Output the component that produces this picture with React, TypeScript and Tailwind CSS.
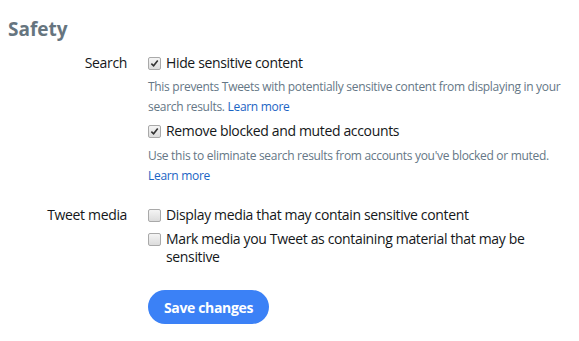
export default function App() {
  return (
    <div className="w-[579px] h-[341px] bg-white overflow-hidden font-['Open_Sans',sans-serif] text-[#14171a] tracking-[-0.35px]">
      <h2 className="pl-2 pt-[15px] text-[19px] leading-[28px] font-bold text-[#66757f] tracking-normal">Safety</h2>

      <div className="mt-[11px] grid grid-cols-[127px_1fr] gap-x-[21px] pr-1">
        <div className="text-right text-[14px] leading-[18px]">Search</div>
        <div>
          <Check checked label="Hide sensitive content" />
          <p className="mt-[5px] text-[12px] leading-[20px] text-[#657786] tracking-[-0.3px]">
            This prevents Tweets with potentially sensitive content from displaying in your search results.{" "}
            <a className="text-[#1b64c4]">Learn more</a>
          </p>
          <div className="mt-[5px]">
            <Check checked label="Remove blocked and muted accounts" />
          </div>
          <p className="mt-[6px] pr-3 text-[12px] leading-[20px] text-[#657786] tracking-[-0.3px]">
            Use this to eliminate search results from accounts you've blocked or muted.{" "}
            <a className="text-[#1b64c4]">Learn more</a>
          </p>
        </div>

        <div className="mt-[20px] text-right text-[14px] leading-[18px]">Tweet media</div>
        <div className="mt-[20px]">
          <Check label="Display media that may contain sensitive content" />
          <div className="mt-[6px]">
            <Check label="Mark media you Tweet as containing material that may be sensitive" />
          </div>
          <button className="mt-[24px] h-[34px] w-[121px] rounded-full bg-[#3b81f6] text-white text-[14px] font-bold">
            Save changes
          </button>
        </div>
      </div>
    </div>
  );
}

function Check({ label, checked = false }: { label: string; checked?: boolean }) {
  return (
    <label className="flex items-start gap-[5px] text-[14px] leading-[18px] pr-10">
      <span className="mt-[3px] w-[13px] h-[13px] shrink-0 rounded-[2px] border border-[#a9a9a9] bg-gradient-to-b from-[#f4f4f4] to-[#dcdcdc] flex items-center justify-center">
        {checked && (
          <svg viewBox="0 0 10 10" className="w-[9px] h-[9px]">
            <path d="M1.5 5.2 L4 7.6 L8.6 1.8" fill="none" stroke="#333" strokeWidth="1.8" />
          </svg>
        )}
      </span>
      <span className="flex-1">{label}</span>
    </label>
  );
}
